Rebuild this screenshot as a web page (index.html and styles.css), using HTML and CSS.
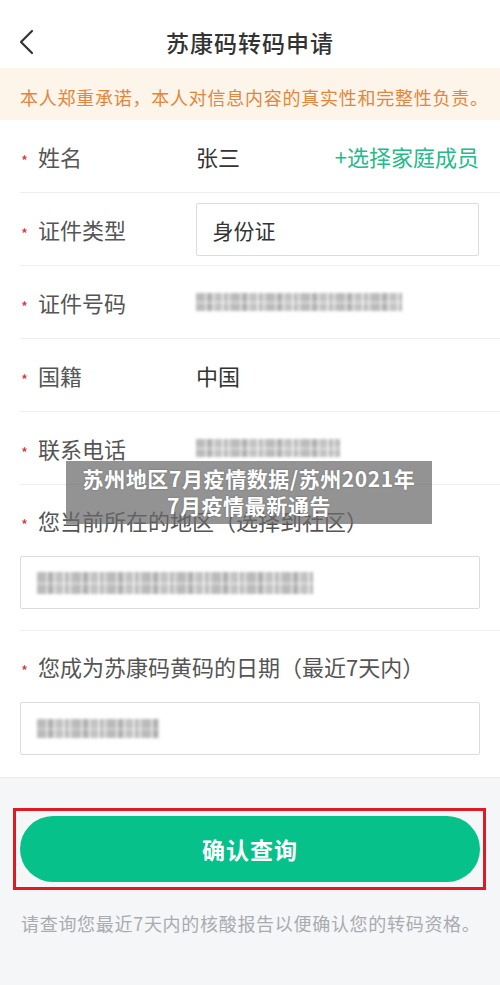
FILE: index.html
```html
<!DOCTYPE html>
<html lang="zh-CN">
<head>
<meta charset="utf-8">
<title>苏康码转码申请</title>
<link rel="stylesheet" href="styles.css">
</head>
<body>
<div class="page">
  <header class="topbar">
    <svg class="back" width="16" height="26" viewBox="0 0 16 26"><path d="M14 2 L3 13 L14 24" fill="none" stroke="#333" stroke-width="2.2" stroke-linecap="round" stroke-linejoin="round"/></svg>
    <h1 class="title">苏康码转码申请</h1>
  </header>
  <div class="notice">本人郑重承诺，本人对信息内容的真实性和完整性负责。</div>

  <section class="form">
    <div class="row">
      <span class="star">*</span><span class="label">姓名</span>
      <span class="value">张三</span>
      <span class="link">+选择家庭成员</span>
    </div>
    <div class="row">
      <span class="star">*</span><span class="label">证件类型</span>
      <div class="box box-inline">身份证</div>
    </div>
    <div class="row">
      <span class="star">*</span><span class="label">证件号码</span>
      <div class="blur blur-id"></div>
    </div>
    <div class="row">
      <span class="star">*</span><span class="label">国籍</span>
      <span class="value">中国</span>
    </div>
    <div class="row">
      <span class="star">*</span><span class="label">联系电话</span>
      <div class="blur blur-phone"></div>
    </div>
    <div class="block">
      <div class="block-label"><span class="star">*</span><span class="label">您当前所在的地区（选择到社区）</span></div>
      <div class="box box-full"><div class="blur blur-addr"></div></div>
    </div>
    <div class="block last">
      <div class="block-label"><span class="star">*</span><span class="label">您成为苏康码黄码的日期（最近7天内）</span></div>
      <div class="box box-full"><div class="blur blur-date"></div></div>
    </div>
  </section>

  <section class="bottom">
    <div class="redframe"><button class="confirm">确认查询</button></div>
    <p class="tip">请查询您最近7天内的核酸报告以便确认您的转码资格。</p>
  </section>

  <div class="caption">苏州地区7月疫情数据/苏州2021年<br>7月疫情最新通告</div>
</div>
</body>
</html>
```
FILE: styles.css
```css
* { box-sizing: border-box; }
html, body { margin: 0; padding: 0; }
body {
  font-family: "Noto Sans CJK SC", "Noto Sans", sans-serif;
  background: #fff;
  color: #333;
}
.page {
  position: relative;
  width: 500px;
  height: 985px;
  overflow: hidden;
  background: #f5f6f8;
}
.topbar {
  height: 68px;
  background: #fff;
  display: flex;
  align-items: center;
  justify-content: center;
  position: relative;
}
.back { position: absolute; left: 18px; top: 29px; }
.title {
  margin: 0;
  font-size: 23px;
  font-weight: 500;
  color: #333;
  letter-spacing: 1px;
  padding-top: 16px;
}
.notice {
  height: 52px;
  background: #fdf4ea;
  color: #e0873d;
  font-size: 18px;
  letter-spacing: 0.75px;
  display: flex;
  align-items: center;
  padding-left: 20px;
  padding-top: 6px;
  white-space: nowrap;
}
.form {
  background: #fff;
  padding-left: 20px;
  border-bottom: 1px solid #e9eaec;
}
.row {
  height: 73px;
  border-bottom: 1px solid #eeeeee;
  display: flex;
  align-items: center;
  padding-right: 21px;
}
.star {
  color: #d8303a;
  font-size: 15px;
  width: 18px;
  padding-left: 1px;
  line-height: 1;
  position: relative;
  top: 4px;
}
.label {
  font-size: 22px;
  color: #555;
  width: 158px;
  white-space: nowrap;
}
.value {
  font-size: 22px;
  color: #333;
  flex: 1;
}
.link {
  font-size: 22px;
  color: #27b98a;
}
.box {
  border: 1px solid #dcdcdc;
  border-radius: 2px;
  background: #fff;
  font-size: 21px;
  color: #333;
  display: flex;
  align-items: center;
  padding-left: 16px;
}
.box-inline {
  width: 284px;
  height: 53px;
  margin-top: 1px;
}
.box-full {
  width: 460px;
  height: 53px;
}
.block {
  padding: 21px 21px 21px 0;
  border-bottom: 1px solid #eeeeee;
}
.block.last { border-bottom: none; padding-top: 21px; padding-bottom: 22px; }
.block-label {
  display: flex;
  align-items: center;
  height: 28px;
  margin-bottom: 22px;
}
.block-label .label { width: auto; }
.blur {
  height: 18px;
  filter: blur(1.4px);
  opacity: 0.6;
  background:
    linear-gradient(180deg, rgba(255,255,255,0.0) 0 45%, rgba(255,255,255,0.35) 45% 60%, rgba(255,255,255,0) 60%),
    repeating-linear-gradient(90deg, #8d8d8d 0 9px, #d4d4d4 9px 11px, #7a7a7a 11px 16px, #c4c4c4 16px 19px, #9a9a9a 19px 26px, #e6e6e6 26px 28px, #858585 28px 31px, #bbbbbb 31px 35px);
}
.blur-id { width: 206px; }
.blur-phone { width: 144px; }
.blur-addr { width: 276px; height: 22px; }
.blur-date { width: 122px; height: 19px; }
.bottom {
  padding: 30px 14px 0 13px;
}
.redframe {
  border: 3px solid #e01a22;
  padding: 5px 3px 5px 4px;
  width: 473px;
  height: 82px;
}
.confirm {
  display: block;
  width: 100%;
  height: 66px;
  border: none;
  border-radius: 33px;
  background: #06c18a;
  color: #fff;
  font-family: inherit;
  font-size: 23px;
  font-weight: 700;
  letter-spacing: 1px;
}
.tip {
  margin: 20px 0 0 8px;
  font-size: 18px;
  letter-spacing: 0.7px;
  color: #a9abb0;
  white-space: nowrap;
}
.caption {
  position: absolute;
  left: 66px;
  top: 461px;
  width: 366px;
  height: 63px;
  background: rgba(105, 105, 105, 0.72);
  color: #fff;
  font-size: 21px;
  font-weight: 700;
  letter-spacing: 0.6px;
  line-height: 27px;
  text-align: center;
  padding-top: 4px;
  text-shadow: 0 0 2px rgba(0,0,0,0.3);
}
```
